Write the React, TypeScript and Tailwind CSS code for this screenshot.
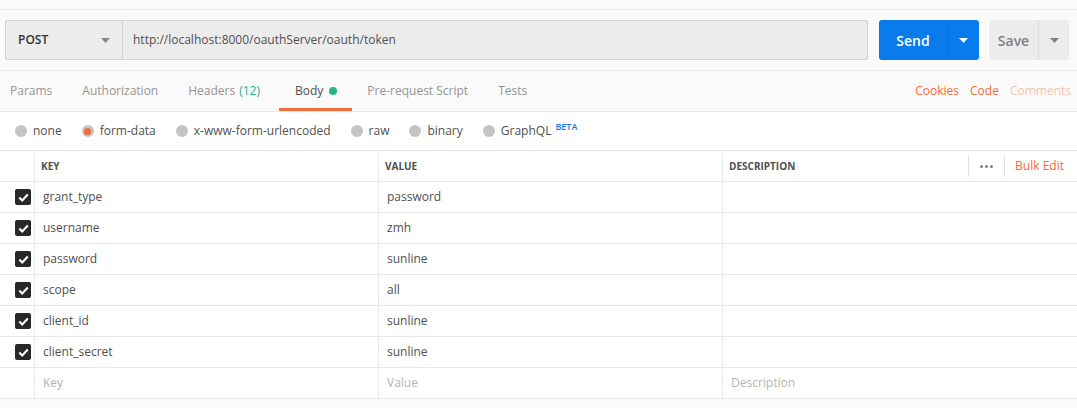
const TABS = [
  { label: 'Params' },
  { label: 'Authorization' },
  { label: 'Headers', count: '(12)' },
  { label: 'Body', active: true },
  { label: 'Pre-request Script' },
  { label: 'Tests' },
];

const BODY_TYPES = ['none', 'form-data', 'x-www-form-urlencoded', 'raw', 'binary', 'GraphQL'];

const ROWS = [
  ['grant_type', 'password'],
  ['username', 'zmh'],
  ['password', 'sunline'],
  ['scope', 'all'],
  ['client_id', 'sunline'],
  ['client_secret', 'sunline'],
];

function Caret({ className }: { className: string }) {
  return (
    <svg width="9" height="5" viewBox="0 0 9 5" className={className}>
      <path d="M0 0h9L4.5 5z" fill="currentColor" />
    </svg>
  );
}

function Check() {
  return (
    <div className="w-4 h-4 rounded-[2px] bg-[#282828] flex items-center justify-center">
      <svg width="11" height="9" viewBox="0 0 11 9">
        <path d="M1.3 4.6l2.9 2.8L9.8 1.6" stroke="#fff" strokeWidth="2.1" fill="none" />
      </svg>
    </div>
  );
}

export default function App() {
  return (
    <div
      className="w-[1077px] h-[408px] bg-[#fafafa] text-[#505050] overflow-hidden"
      style={{ fontFamily: '"Open Sans", "Noto Sans", sans-serif' }}
    >
      <div className="h-[10px] border-b border-[#ececec] bg-[#fafafa]" />

      {/* url bar */}
      <div className="h-[61px] flex items-start pt-[10px] pl-[5px] pr-[8px] border-b border-[#e8e8e8]">
        <div className="flex h-10 flex-1 border border-[#d4d4d4] rounded-[2px] bg-[#ececec]">
          <div className="w-[117px] flex items-center justify-between pl-3 pr-[12px] border-r border-[#d4d4d4]">
            <span className="text-[12px] font-semibold text-[#333]">POST</span>
            <Caret className="text-[#888]" />
          </div>
          <div className="flex items-center pl-[10px] text-[12px] text-[#505050]">
            http://localhost:8000/oauthServer/oauth/token
          </div>
        </div>
        <div className="ml-[11px] flex h-10 w-[100px] rounded-[3px] bg-[#097bed] text-white">
          <div className="w-[69px] flex items-center justify-center text-[14px] font-semibold border-r border-[#0a6fd6]">
            Send
          </div>
          <div className="flex-1 flex items-center justify-center">
            <Caret className="text-white" />
          </div>
        </div>
        <div className="ml-[10px] flex h-10 w-[80px] rounded-[3px] bg-[#ececec] text-[#808080]">
          <div className="w-[50px] flex items-center justify-center text-[14px] font-semibold border-r border-[#dcdcdc]">
            Save
          </div>
          <div className="flex-1 flex items-center justify-center">
            <Caret className="text-[#808080]" />
          </div>
        </div>
      </div>

      {/* tabs */}
      <div className="h-[41px] flex items-stretch border-b border-[#e8e8e8] pl-[10px] pr-[6px] text-[12px]">
        {TABS.map((t) =>
          t.active ? (
            <div
              key={t.label}
              className="relative flex items-center -ml-[11px] pl-[16px] pr-[15px] mr-[15px] text-[#505050]"
            >
              {t.label}
              <span className="ml-[6px] w-2 h-2 rounded-full bg-[#26b47f]" />
              <span className="absolute left-0 right-0 bottom-0 h-[3px] bg-[#f26b3a]" />
            </div>
          ) : (
            <div key={t.label} className="flex items-center mr-[30px] text-[#959595]">
              {t.label}
              {t.count && <span className="ml-[4px] text-[#26b47f]">{t.count}</span>}
            </div>
          )
        )}
        <div className="ml-auto flex items-center gap-[11px]">
          <span className="text-[#f26b3a]">Cookies</span>
          <span className="text-[#f26b3a]">Code</span>
          <span className="text-[#f8c4b0]">Comments</span>
        </div>
      </div>

      {/* body types */}
      <div className="h-[39px] bg-white flex items-center pl-[15px] text-[12px] border-b border-[#e8e8e8]">
        {BODY_TYPES.map((b) => (
          <div key={b} className="flex items-center mr-[20px]">
            {b === 'form-data' ? (
              <span className="w-[12px] h-[12px] rounded-full bg-[#c4c4c4] flex items-center justify-center">
                <span className="w-[7px] h-[7px] rounded-full bg-[#f26b3a]" />
              </span>
            ) : (
              <span className="w-[12px] h-[12px] rounded-full bg-[#c4c4c4]" />
            )}
            <span className="ml-[6px] text-[#505050]">{b}</span>
            {b === 'GraphQL' && (
              <span className="ml-[4px] -mt-[9px] text-[9px] font-semibold text-[#097bed]">BETA</span>
            )}
          </div>
        ))}
      </div>

      {/* table */}
      <div className="bg-white text-[12px]">
        <div className="flex h-[31px] border-b border-[#e8e8e8] text-[10px] font-bold text-[#505050]">
          <div className="w-[35px] border-r border-[#e8e8e8]" />
          <div className="w-[344px] border-r border-[#e8e8e8] flex items-center pl-[6px]">KEY</div>
          <div className="w-[344px] border-r border-[#e8e8e8] flex items-center pl-[6px]">VALUE</div>
          <div className="flex-1 flex items-center pl-[6px]">
            DESCRIPTION
            <div className="ml-auto flex items-center h-[22px]">
              <div className="h-full border-l border-[#e3e3e3] w-[36px] flex items-center justify-center gap-[2px]">
                <span className="w-[3px] h-[3px] rounded-full bg-[#808080]" />
                <span className="w-[3px] h-[3px] rounded-full bg-[#808080]" />
                <span className="w-[3px] h-[3px] rounded-full bg-[#808080]" />
              </div>
              <div className="h-full border-l border-[#e3e3e3] flex items-center pl-[10px] pr-[13px] text-[12px] font-normal text-[#f26b3a]">
                Bulk Edit
              </div>
            </div>
          </div>
        </div>
        {ROWS.map(([k, v]) => (
          <div key={k} className="flex h-[31px] border-b border-[#e8e8e8] text-[#505050]">
            <div className="w-[35px] border-r border-[#e8e8e8] flex items-center pl-[15px]">
              <Check />
            </div>
            <div className="w-[344px] border-r border-[#e8e8e8] flex items-center pl-[8px]">{k}</div>
            <div className="w-[344px] border-r border-[#e8e8e8] flex items-center pl-[8px]">{v}</div>
            <div className="flex-1" />
          </div>
        ))}
        <div className="flex h-[31px] border-b border-[#e8e8e8] text-[#b3b3b3]">
          <div className="w-[35px] border-r border-[#e8e8e8]" />
          <div className="w-[344px] border-r border-[#e8e8e8] flex items-center pl-[8px]">Key</div>
          <div className="w-[344px] border-r border-[#e8e8e8] flex items-center pl-[8px]">Value</div>
          <div className="flex-1 flex items-center pl-[8px]">Description</div>
        </div>
      </div>
    </div>
  );
}
